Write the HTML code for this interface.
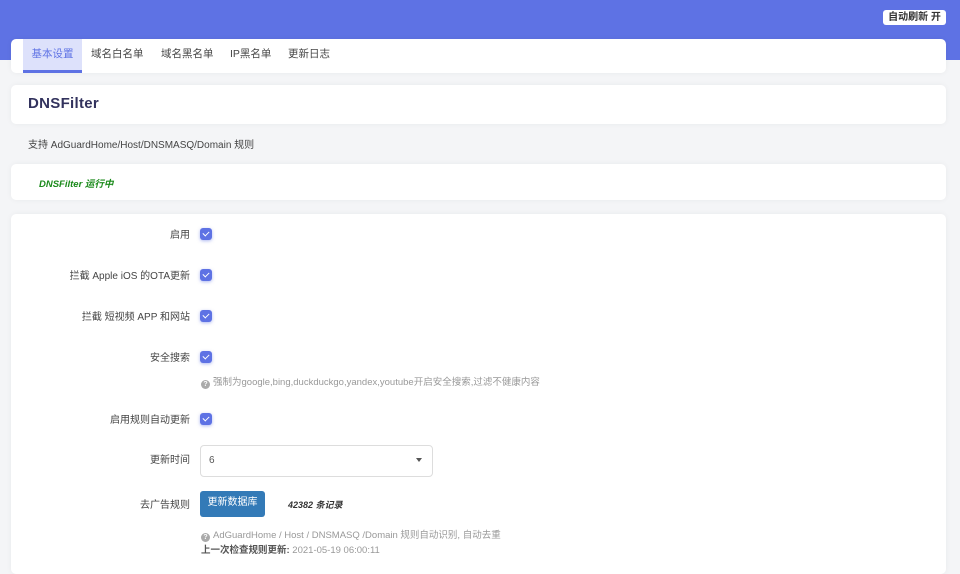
<!DOCTYPE html>
<html><head><meta charset="utf-8"><style>
*{box-sizing:border-box;margin:0;padding:0}
body{width:960px;height:565px;overflow:hidden;background:#f4f5f7;font-family:"Liberation Sans","Noto Sans CJK SC",sans-serif;font-size:10px;color:#32325d;position:relative}
.hdr{position:absolute;left:0;top:0;width:960px;height:60px;background:#5e72e4}
.ar{position:absolute;left:883px;top:10px;width:63px;height:15px;background:#fff;border-radius:3px;font-size:10px;font-weight:bold;color:#333;text-align:center;line-height:15px}
.card{position:absolute;left:11px;width:935px;background:#fff;border-radius:5px;box-shadow:0 0 6px rgba(0,0,0,.05)}
.tab{position:absolute;top:0;height:34px;line-height:30px;font-size:10.5px;color:#444}
.tab.a{background:#dde1fb;color:#5e72e4;border-bottom:3px solid #5e72e4}
.lbl{position:absolute;right:770px;font-size:10px;color:#444;text-align:right;white-space:nowrap}
.cb{position:absolute;left:200px;width:12px;height:12px;background:#5e72e4;border-radius:3px;box-shadow:0 1px 3px rgba(94,114,228,.5)}
.cb:after{content:"";position:absolute;left:4px;top:2px;width:3px;height:5px;border:solid #fff;border-width:0 1.5px 1.5px 0;transform:rotate(45deg)}
.help{position:absolute;left:201px;font-size:9.5px;color:#999;white-space:nowrap}
.q{display:inline-block;width:9px;height:9px;border-radius:50%;background:#aaa;color:#fff;font-size:7px;font-weight:bold;text-align:center;line-height:9px;vertical-align:-1px;margin-right:3px}
</style></head><body>
<div class="hdr"></div>
<div class="ar">自动刷新 开</div>
<div class="card" style="top:39px;height:34px">
<div class="tab a" style="left:12px;width:59px;text-align:center">基本设置</div>
<div class="tab" style="left:80px">域名白名单</div>
<div class="tab" style="left:150px">域名黑名单</div>
<div class="tab" style="left:219px">IP黑名单</div>
<div class="tab" style="left:277px">更新日志</div>
</div>
<div class="card" style="top:85px;height:39px"><div style="position:absolute;left:17px;top:10px;font-size:15px;font-weight:bold;color:#32325d;letter-spacing:.3px">DNSFilter</div></div>
<div style="position:absolute;left:28px;top:136px;font-size:10px;color:#444">支持 AdGuardHome/Host/DNSMASQ/Domain 规则</div>
<div class="card" style="top:164px;height:36px"><div style="position:absolute;left:28px;top:12px;font-size:9.5px;font-weight:bold;font-style:italic;color:#1a8a1a">DNSFilter 运行中</div></div>
<div class="card" style="top:214px;height:360px"></div>
<div class="lbl" style="top:226px">启用</div><div class="cb" style="top:228px"></div>
<div class="lbl" style="top:267px">拦截 Apple iOS 的OTA更新</div><div class="cb" style="top:269px"></div>
<div class="lbl" style="top:308px">拦截 短视频 APP 和网站</div><div class="cb" style="top:310px"></div>
<div class="lbl" style="top:349px">安全搜索</div><div class="cb" style="top:351px"></div>
<div class="help" style="top:374px"><span class="q">?</span>强制为google,bing,duckduckgo,yandex,youtube开启安全搜索,过滤不健康内容</div>
<div class="lbl" style="top:411px">启用规则自动更新</div><div class="cb" style="top:413px"></div>
<div class="lbl" style="top:451px">更新时间</div>
<div style="position:absolute;left:200px;top:445px;width:233px;height:32px;border:1px solid #ddd;border-radius:4px;background:#fff"><span style="position:absolute;left:8px;top:9px;font-size:10px;color:#555">6</span><span style="position:absolute;right:10px;top:12px;border:3.5px solid transparent;border-top:4px solid #555"></span></div>
<div class="lbl" style="top:496px">去广告规则</div>
<div style="position:absolute;left:200px;top:491px;width:65px;height:26px;background:#337ab7;border-radius:3px;color:#fff;font-size:10px;text-align:center;line-height:24px">更新数据库</div>
<div style="position:absolute;left:288px;top:498px;font-size:9px;font-weight:bold;font-style:italic;color:#333">42382 条记录</div>
<div class="help" style="top:527px"><span class="q">?</span>AdGuardHome / Host / DNSMASQ /Domain 规则自动识别, 自动去重</div>
<div class="help" style="top:542px"><b style="color:#555">上一次检查规则更新:</b> 2021-05-19 06:00:11</div>
</body></html>
